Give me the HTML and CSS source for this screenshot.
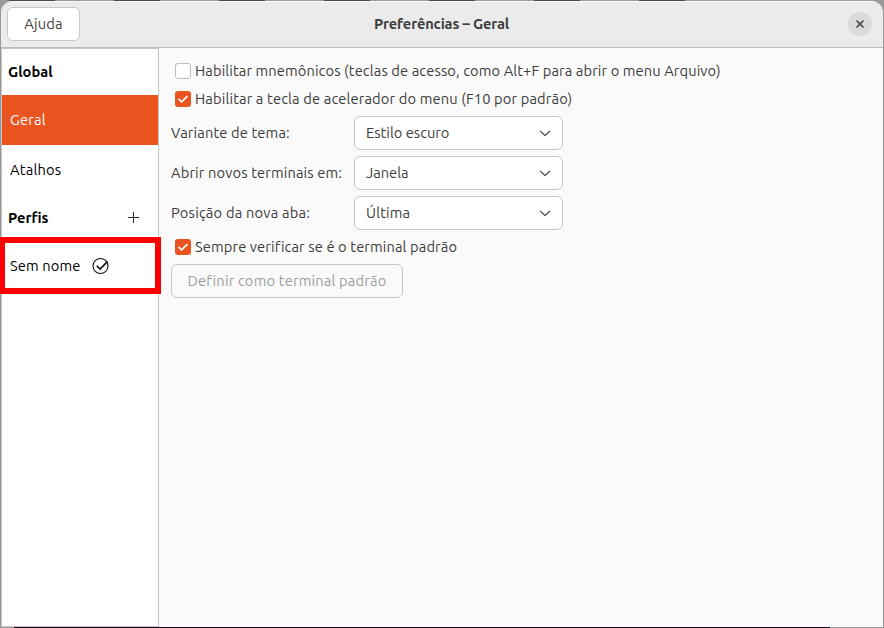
FILE: index.html
```html
<!DOCTYPE html>
<html lang="pt-BR">
<head>
<meta charset="utf-8">
<title>Preferências – Geral</title>
<link rel="stylesheet" href="styles.css">
</head>
<body>
<div class="window">
  <header class="titlebar">
    <button class="button help"><span class="t-help">Ajuda</span></button>
    <h1 class="title"><span class="t-title">Preferências – Geral</span></h1>
    <button class="close" aria-label="Fechar"><svg width="24" height="24" viewBox="0 0 24 24"><path d="M8.5 8.5l7 7M15.5 8.5l-7 7" fill="none" stroke="#3d3d3d" stroke-width="1.5"/></svg></button>
  </header>
  <div class="content">
    <nav class="sidebar">
      <div class="heading"><span class="t-global">Global</span></div>
      <div class="row selected"><span class="t-geral">Geral</span></div>
      <div class="row"><span class="t-atalhos">Atalhos</span></div>
      <div class="heading profiles"><span class="t-perfis">Perfis</span><svg width="12" height="12" viewBox="0 0 12 12"><path d="M5.5 0v11M0 5.5h11" fill="none" stroke="#2c2c2c"/></svg></div>
      <div class="row profile"><span class="t-sem">Sem nome</span><svg width="18" height="18" viewBox="0 0 18 18"><circle cx="8.5" cy="9" r="7.5" fill="none" stroke="#111" stroke-width="1.1"/><path d="M4.8 8.8l3.4 3.2 7.3-7.6" fill="none" stroke="#111" stroke-width="1.6"/></svg></div>
    </nav>
    <main class="panel">
      <label class="check-row"><span class="box"></span><span class="t-mnem">Habilitar mnemônicos (teclas de acesso, como Alt+F para abrir o menu Arquivo)</span></label>
      <label class="check-row"><span class="box on"><svg width="16" height="16" viewBox="0 0 16 16"><path d="M3.5 7.8l3.1 3.1 5.9-5.7" fill="none" stroke="#fff" stroke-width="1.7"/></svg></span><span class="t-accel">Habilitar a tecla de acelerador do menu (F10 por padrão)</span></label>
      <div class="options">
        <div class="option"><span class="label"><span class="t-variant">Variante de tema:</span></span><button class="button combo"><span class="t-dark">Estilo escuro</span><svg width="12" height="8" viewBox="0 0 12 8"><path d="M1 2l5 4.5 5-4.5" fill="none" stroke="#444" stroke-width="1.1"/></svg></button></div>
        <div class="option"><span class="label"><span class="t-open">Abrir novos terminais em:</span></span><button class="button combo"><span class="t-janela">Janela</span><svg width="12" height="8" viewBox="0 0 12 8"><path d="M1 2l5 4.5 5-4.5" fill="none" stroke="#444" stroke-width="1.1"/></svg></button></div>
        <div class="option"><span class="label"><span class="t-pos">Posição da nova aba:</span></span><button class="button combo"><span class="t-ultima">Última</span><svg width="12" height="8" viewBox="0 0 12 8"><path d="M1 2l5 4.5 5-4.5" fill="none" stroke="#444" stroke-width="1.1"/></svg></button></div>
      </div>
      <label class="check-row"><span class="box on"><svg width="16" height="16" viewBox="0 0 16 16"><path d="M3.5 7.8l3.1 3.1 5.9-5.7" fill="none" stroke="#fff" stroke-width="1.7"/></svg></span><span class="t-always">Sempre verificar se é o terminal padrão</span></label>
      <button class="button define" disabled><span class="t-define">Definir como terminal padrão</span></button>
    </main>
  </div>
</div>
<div class="highlight"></div>
</body>
</html>
```
FILE: styles.css
```css
* { box-sizing: border-box; }
body {
  margin: 0;
  width: 884px;
  height: 628px;
  overflow: hidden;
  padding: 1px 1px 1px;
  font: 14.667px/20px "Ubuntu", "Noto Sans", sans-serif;
  letter-spacing: 0.14px;
  color: #3d3d3d;
  background:
    linear-gradient(#4b474b, #4b474b) 9px 0 / 46px 1px no-repeat,
    linear-gradient(#4b474b, #4b474b) 114px 0 / 46px 1px no-repeat,
    linear-gradient(#4b474b, #4b474b) 219px 0 / 46px 1px no-repeat,
    linear-gradient(#4b474b, #4b474b) 324px 0 / 46px 1px no-repeat,
    linear-gradient(#4b474b, #4b474b) 429px 0 / 46px 1px no-repeat,
    linear-gradient(#4b474b, #4b474b) 534px 0 / 46px 1px no-repeat,
    linear-gradient(#4b474b, #4b474b) 639px 0 / 46px 1px no-repeat,
    linear-gradient(#1b0716, #1b0716) 14px 627px / 816px 1px no-repeat,
    #999;
}
button { font: inherit; letter-spacing: inherit; color: inherit; margin: 0; }
span { white-space: nowrap; }
svg { display: block; flex: none; }
.t-mnem { letter-spacing: 0.11px; }
.t-always { letter-spacing: 0.12px; }
.t-pos, .t-help, .t-geral, .t-atalhos { letter-spacing: 0.2px; }
.t-define { letter-spacing: 0.18px; }
.t-dark, .t-janela, .t-global, .t-perfis { letter-spacing: 0; }
.t-title { letter-spacing: -0.15px; }
.window {
  height: 626px;
  display: flex;
  flex-direction: column;
  border-radius: 12px 12px 0 0;
  overflow: hidden;
  background: #fafafa;
}
.titlebar {
  height: 47px;
  flex: none;
  display: grid;
  grid-template-columns: 73px 1fr 73px;
  align-items: center;
  padding: 0 11px 1px 6px;
  background: #ebebeb;
  border-top: 1px solid #fafafa;
  border-bottom: 1px solid #bcbcbc;
}
.button {
  height: 34px;
  display: flex;
  align-items: center;
  background: #fff;
  border: 1px solid #c6c6c6;
  border-radius: 6px;
}
.help { justify-content: center; padding: 0; }
.title { margin: 0; padding-left: 4px; font-size: 14.667px; text-align: center; }
.close {
  justify-self: end;
  width: 24px;
  height: 24px;
  padding: 0;
  border: 0;
  border-radius: 50%;
  background: #dadada;
}
.content { flex: 1; display: flex; }
.sidebar {
  width: 158px;
  flex: none;
  background: #fff;
  border: 1px solid #c6c6c6;
  color: #000;
}
.heading {
  height: 46px;
  display: flex;
  align-items: center;
  padding: 0 18px 0 6px;
  font-weight: 700;
}
.profiles { justify-content: space-between; }
.row { height: 50px; display: flex; align-items: center; padding-left: 8px; }
.selected { background: #e95420; color: #fff; }
.profile { gap: 11px; }
.panel { padding: 9px 0 0 12px; }
.check-row { height: 28px; display: flex; align-items: center; gap: 4px; padding-left: 4px; }
.box {
  width: 16px;
  height: 16px;
  border: 1px solid #bdbdbd;
  border-radius: 3px;
  background: #fff;
}
.on { border: 0; background: #e95420; }
.options { display: grid; gap: 6px; padding: 3px 0 3px; }
.option { display: grid; grid-template-columns: 183px 209px; align-items: center; }
.combo { justify-content: space-between; padding: 0 11px; }
.define { width: 232px; margin-top: 3px; padding: 0; justify-content: center; color: #9d9d9d; background: #fafafa; }
.highlight {
  position: absolute;
  left: 0;
  top: 237px;
  width: 161px;
  height: 57px;
  border: 6px solid #f00;
  border-left-width: 5px;
}
```
